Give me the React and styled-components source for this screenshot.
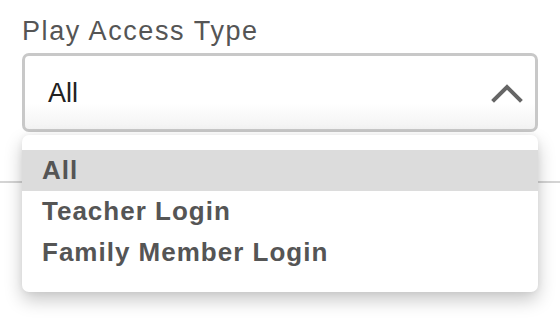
import React from 'react';
import styled, { createGlobalStyle } from 'styled-components';

const GlobalStyle = createGlobalStyle`
  body {
    margin: 0;
    background: #fff;
    font-family: "Liberation Sans", Arial, sans-serif;
  }
`;

const Page = styled.div`
  width: 560px;
  height: 324px;
  overflow: hidden;
  position: relative;
`;

const Field = styled.div`
  padding: 16px 22px 0 22px;
  position: relative;
`;

const Label = styled.div`
  font-size: 27px;
  line-height: 30px;
  letter-spacing: 1.6px;
  color: #555;
  margin-bottom: 7px;
`;

const SelectBox = styled.div`
  height: 79px;
  box-sizing: border-box;
  border: 3px solid #c8c8c8;
  border-radius: 7px;
  background: linear-gradient(#fff 65%, #f3f3f3);
  display: flex;
  align-items: center;
  justify-content: space-between;
  padding: 0 12px 0 23px;
`;

const Value = styled.span`
  font-size: 27px;
  line-height: 30px;
  color: #222;
`;

const Divider = styled.hr`
  margin: 49px 0 0 0;
  border: none;
  border-top: 2px solid #d4d4d4;
`;

const Menu = styled.ul`
  position: absolute;
  top: 135px;
  left: 22px;
  right: 22px;
  margin: 0;
  padding: 15px 0 19px 0;
  list-style: none;
  background: #fff;
  border-radius: 7px;
  box-shadow: 0 8px 18px rgba(0, 0, 0, 0.22), 0 0 6px rgba(0, 0, 0, 0.06);
`;

const Option = styled.li`
  height: 41px;
  line-height: 41px;
  padding-left: 20px;
  font-size: 26px;
  font-weight: bold;
  letter-spacing: 1px;
  color: #555;
  background: ${(p) => (p.$active ? '#dcdcdc' : 'transparent')};
`;

function Chevron() {
  return (
    <svg width="32" height="20" viewBox="0 0 32 20">
      <polyline
        points="3,17 16,4 29,17"
        fill="none"
        stroke="#666"
        strokeWidth="4"
        strokeLinecap="square"
      />
    </svg>
  );
}

const options = ['All', 'Teacher Login', 'Family Member Login'];

export default function App() {
  return (
    <Page>
      <GlobalStyle />
      <Field>
        <Label>Play Access Type</Label>
        <SelectBox>
          <Value>All</Value>
          <Chevron />
        </SelectBox>
      </Field>
      <Divider />
      <Menu>
        {options.map((o, i) => (
          <Option key={o} $active={i === 0}>
            {o}
          </Option>
        ))}
      </Menu>
    </Page>
  );
}
